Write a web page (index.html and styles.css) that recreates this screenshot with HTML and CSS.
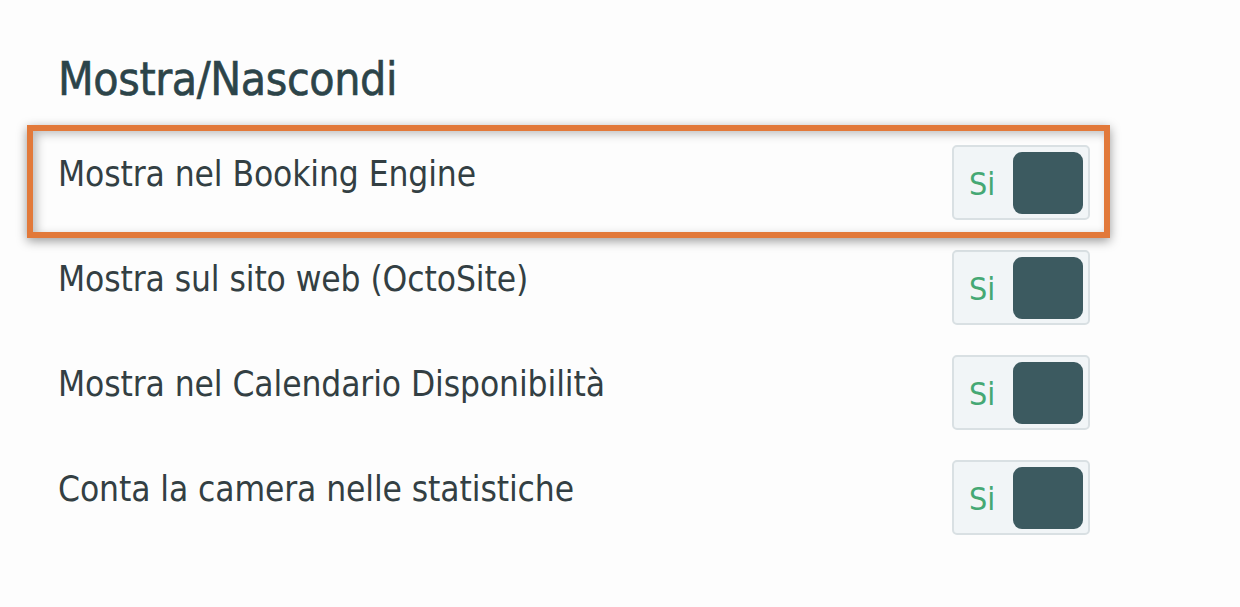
FILE: index.html
```html
<!DOCTYPE html>
<html lang="it">
<head>
<meta charset="utf-8">
<link rel="stylesheet" href="styles.css">
</head>
<body>
<div class="page">
  <h1 class="title">Mostra/Nascondi</h1>
  <div class="list">
    <div class="row">
      <span class="label">Mostra nel Booking Engine</span>
      <span class="toggle"><span class="si">Si</span><span class="knob"></span></span>
    </div>
    <div class="row">
      <span class="label">Mostra sul sito web (OctoSite)</span>
      <span class="toggle"><span class="si">Si</span><span class="knob"></span></span>
    </div>
    <div class="row">
      <span class="label">Mostra nel Calendario Disponibilità</span>
      <span class="toggle"><span class="si">Si</span><span class="knob"></span></span>
    </div>
    <div class="row">
      <span class="label">Conta la camera nelle statistiche</span>
      <span class="toggle"><span class="si">Si</span><span class="knob"></span></span>
    </div>
  </div>
  <div class="highlight"></div>
</div>
</body>
</html>
```
FILE: styles.css
```css
html, body {
  margin: 0;
  padding: 0;
  background: #fdfdfd;
}
.page {
  position: relative;
  width: 1240px;
  height: 607px;
  padding: 54px 0 0 58px;
  box-sizing: border-box;
  font-family: "DejaVu Sans Condensed", "DejaVu Sans", sans-serif;
  color: #2f3f44;
}
.title {
  margin: 0;
  font-size: 46px;
  font-weight: normal;
  line-height: 50px;
  color: #2c4449;
  letter-spacing: -0.4px;
  -webkit-text-stroke: 0.6px #2c4449;
}
.list {
  margin-top: 41px;
  width: 1032px;
  display: flex;
  flex-direction: column;
}
.row {
  height: 105px;
  display: flex;
  justify-content: space-between;
  align-items: flex-start;
}
.label {
  padding-top: 4px;
  font-size: 35px;
  line-height: 50px;
  letter-spacing: -0.1px;
  color: #333f43;
}
.toggle {
  width: 138px;
  height: 75px;
  box-sizing: border-box;
  border: 2px solid #d9e0e3;
  border-radius: 5px;
  background: #f1f5f7;
  display: flex;
  align-items: center;
  padding: 0 5px 0 15px;
  justify-content: space-between;
}
.si {
  font-size: 32px;
  padding-top: 3px;
  color: #45a874;
  font-family: "DejaVu Sans Condensed", sans-serif;
}
.knob {
  width: 70px;
  height: 62px;
  border-radius: 9px;
  background: #3c5a60;
}
.highlight {
  position: absolute;
  left: 27px;
  top: 125px;
  width: 1083px;
  height: 113px;
  box-sizing: border-box;
  border: 6px solid #e2793a;
  box-shadow: 0 3px 10px rgba(0, 0, 0, 0.4), inset 4px 3px 10px rgba(0, 0, 0, 0.25);
  pointer-events: none;
}
```
